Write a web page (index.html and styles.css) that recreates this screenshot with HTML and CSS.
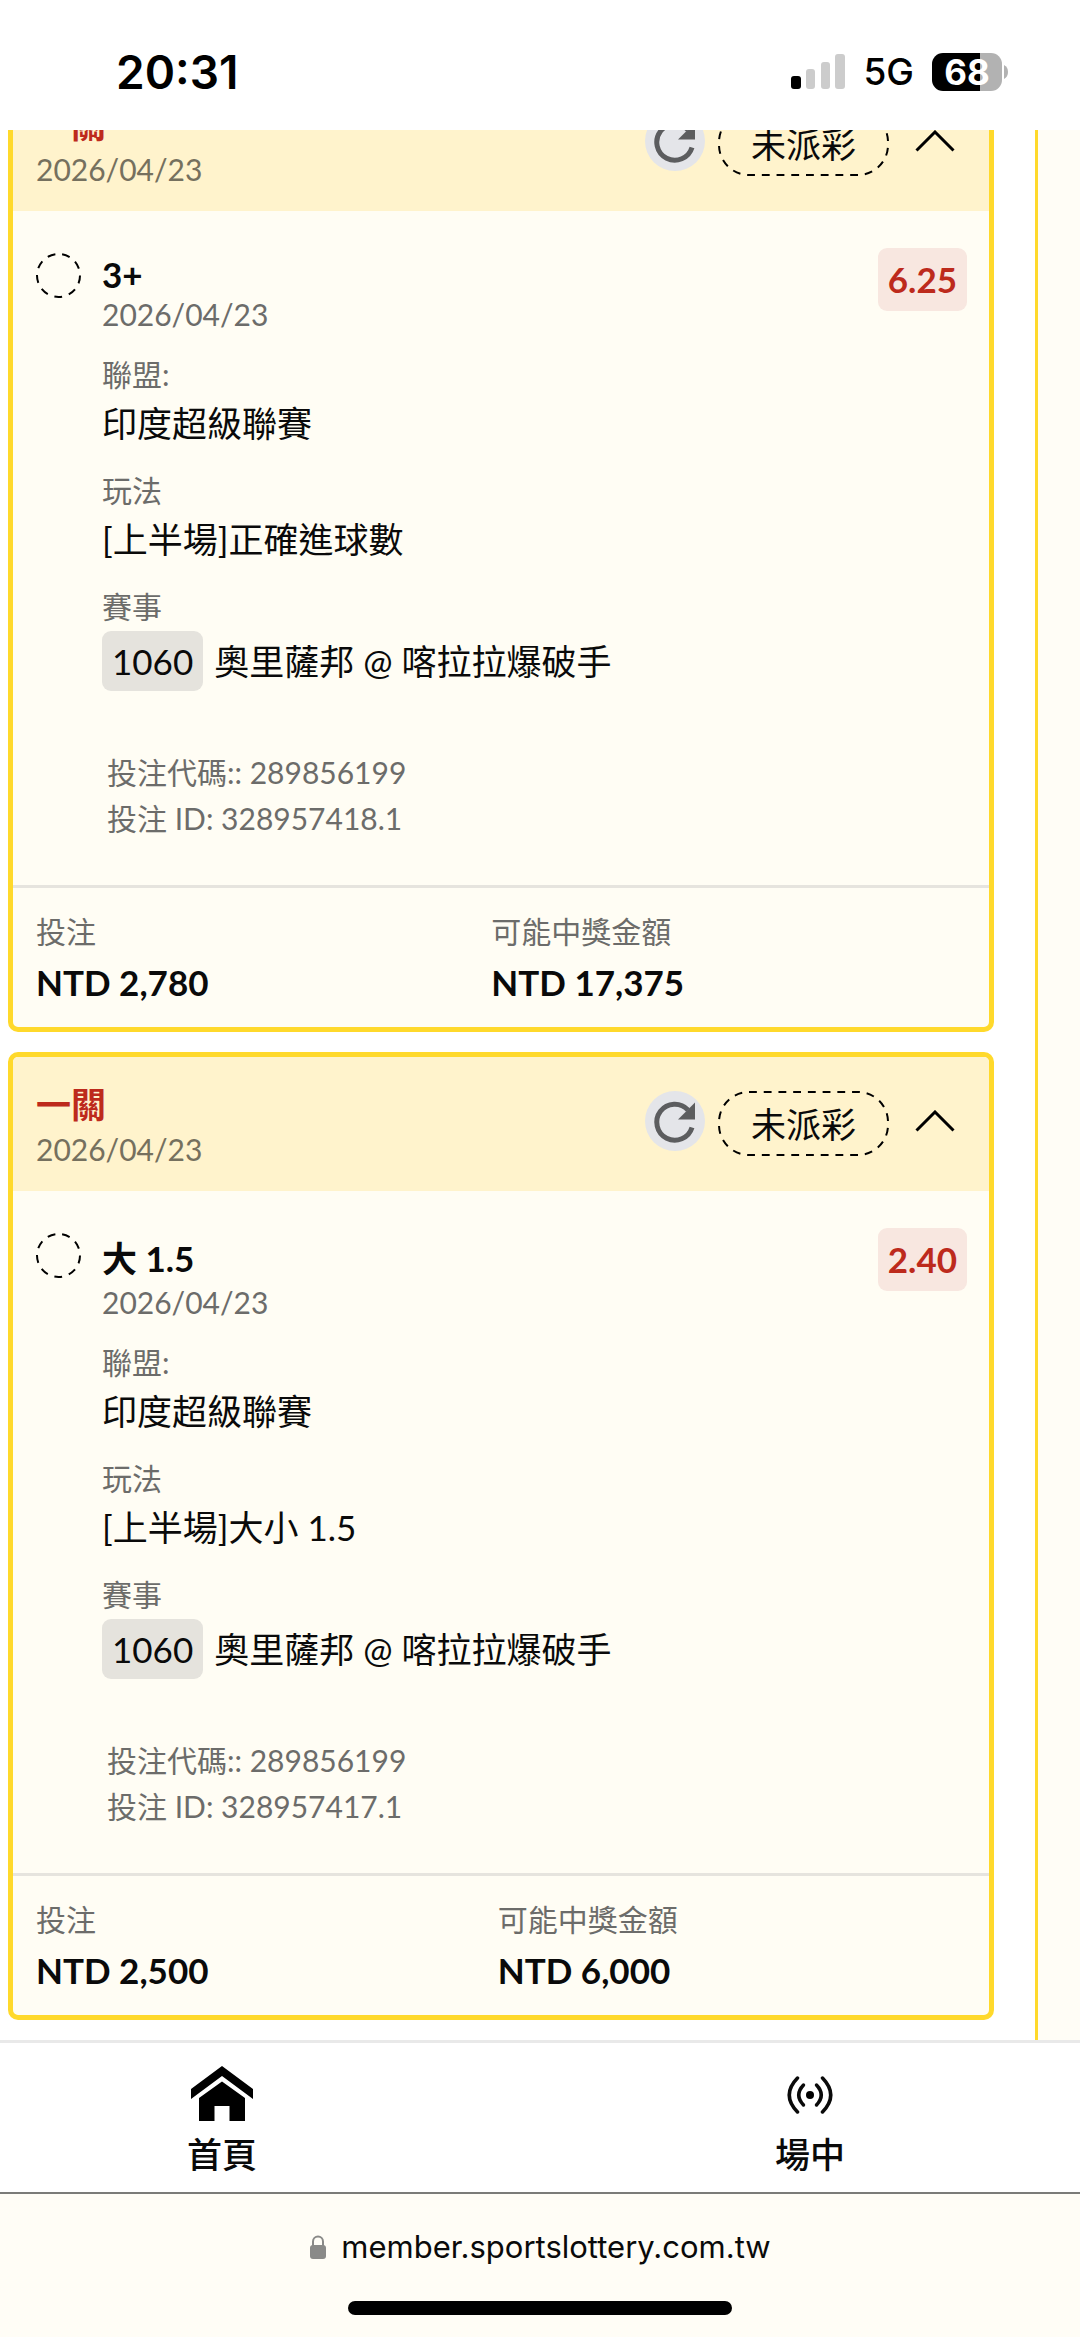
FILE: index.html
```html
<!DOCTYPE html>
<html lang="zh-Hant">
<head>
<meta charset="utf-8">
<meta name="viewport" content="width=device-width, initial-scale=1">
<title>投注紀錄</title>
<link rel="stylesheet" href="styles.css">
</head>
<body>
<div class="screen">
  <header class="status">
    <time class="status-time">20:31</time>
    <div class="status-right">
      <svg class="signal" viewBox="0 0 54 36" aria-hidden="true">
        <rect x="0" y="22" width="10" height="13" rx="3" fill="#000"/>
        <rect x="15" y="15" width="9" height="20" rx="3" fill="#ccc"/>
        <rect x="30" y="8" width="9" height="27" rx="3" fill="#ccc"/>
        <rect x="44" y="0" width="10" height="35" rx="3" fill="#ccc"/>
      </svg>
      <span class="network">5G</span>
      <span class="battery">68</span>
      <svg class="nub" viewBox="0 0 4 14" aria-hidden="true"><path d="M0 0Q4 2 4 7T0 14Z" fill="#b2b2b2"/></svg>
    </div>
  </header>

  <main class="bets">
    <div class="bet-list">
      <article class="card">
        <header class="card-head">
          <div>
            <h2 class="card-title">一關</h2>
            <p class="date">2026/04/23</p>
          </div>
          <div class="actions">
            <button class="refresh" type="button" aria-label="重新整理">
              <svg viewBox="0 0 60 60" aria-hidden="true"><path d="M47 36.500A18 18 0 1 1 43 19" fill="none" stroke="#5c5d5f" stroke-width="5"/><path d="M50 11.500V28.500H33Z" fill="#5c5d5f"/></svg>
            </button>
            <span class="state">
              <svg class="outline" viewBox="0 0 171 65" aria-hidden="true"><rect x="1" y="1" width="169" height="63" rx="30" pathLength="420" stroke-dasharray="8 7"/></svg>
              未派彩
            </span>
            <button class="toggle" type="button" aria-label="收合">
              <svg viewBox="0 0 40 22" aria-hidden="true"><path d="M1.500 20.500 20 2 38.500 20.500" fill="none" stroke="#000" stroke-width="3"/></svg>
            </button>
          </div>
        </header>
        <div class="card-body">
          <svg class="mark" viewBox="0 0 45 45" aria-hidden="true"><circle cx="22.500" cy="22.500" r="21.500" pathLength="135" stroke-dasharray="8 7"/></svg>
          <div class="detail">
            <h3 class="pick">3+</h3>
            <p class="date">2026/04/23</p>
            <dl class="fields">
              <div><dt>聯盟:</dt><dd>印度超級聯賽</dd></div>
              <div><dt>玩法</dt><dd>[上半場]正確進球數</dd></div>
              <div><dt>賽事</dt><dd class="match"><span class="code">1060</span>奧里薩邦 @ 喀拉拉爆破手</dd></div>
            </dl>
            <div class="ids"><p>投注代碼:: 289856199</p><p>投注 ID: 328957418.1</p></div>
          </div>
          <strong class="odds">6.25</strong>
        </div>
        <dl class="totals">
          <div><dt>投注</dt><dd>NTD 2,780</dd></div>
          <div><dt>可能中獎金額</dt><dd>NTD 17,375</dd></div>
        </dl>
      </article>

      <article class="card">
        <header class="card-head">
          <div>
            <h2 class="card-title">一關</h2>
            <p class="date">2026/04/23</p>
          </div>
          <div class="actions">
            <button class="refresh" type="button" aria-label="重新整理">
              <svg viewBox="0 0 60 60" aria-hidden="true"><path d="M47 36.500A18 18 0 1 1 43 19" fill="none" stroke="#5c5d5f" stroke-width="5"/><path d="M50 11.500V28.500H33Z" fill="#5c5d5f"/></svg>
            </button>
            <span class="state">
              <svg class="outline" viewBox="0 0 171 65" aria-hidden="true"><rect x="1" y="1" width="169" height="63" rx="30" pathLength="420" stroke-dasharray="8 7"/></svg>
              未派彩
            </span>
            <button class="toggle" type="button" aria-label="收合">
              <svg viewBox="0 0 40 22" aria-hidden="true"><path d="M1.500 20.500 20 2 38.500 20.500" fill="none" stroke="#000" stroke-width="3"/></svg>
            </button>
          </div>
        </header>
        <div class="card-body">
          <svg class="mark" viewBox="0 0 45 45" aria-hidden="true"><circle cx="22.500" cy="22.500" r="21.500" pathLength="135" stroke-dasharray="8 7"/></svg>
          <div class="detail">
            <h3 class="pick pick-cjk">大 1.5</h3>
            <p class="date">2026/04/23</p>
            <dl class="fields">
              <div><dt>聯盟:</dt><dd>印度超級聯賽</dd></div>
              <div><dt>玩法</dt><dd>[上半場]大小 1.5</dd></div>
              <div><dt>賽事</dt><dd class="match"><span class="code">1060</span>奧里薩邦 @ 喀拉拉爆破手</dd></div>
            </dl>
            <div class="ids"><p>投注代碼:: 289856199</p><p>投注 ID: 328957417.1</p></div>
          </div>
          <strong class="odds">2.40</strong>
        </div>
        <dl class="totals">
          <div><dt>投注</dt><dd>NTD 2,500</dd></div>
          <div><dt>可能中獎金額</dt><dd>NTD 6,000</dd></div>
        </dl>
      </article>
    </div>
    <aside class="next-panel"></aside>
  </main>

  <nav class="tabs">
    <a class="tab tab-home" href="#home">
      <svg viewBox="0 0 62 56" aria-hidden="true"><path d="M31 0 62 23V33L31 10 0 33V23Z"/><path d="M31 15.500 54 32V55H38.500V40H23.500V55H8V32Z"/></svg>
      首頁
    </a>
    <a class="tab" href="#live">
      <svg viewBox="0 0 62 56" aria-hidden="true"><circle cx="31" cy="29" r="4"/><g fill="none" stroke="#0a0a0a" stroke-width="3.500" stroke-linecap="round"><path d="M24.500 19Q15 29 24.500 39"/><path d="M37.500 19Q47 29 37.500 39"/><path d="M18.500 12Q2 29 18.500 46"/><path d="M43.500 12Q60 29 43.500 46"/></g></svg>
      場中
    </a>
  </nav>

  <footer class="browser">
    <div class="address">
      <svg class="lock" viewBox="0 0 18 24" aria-hidden="true"><rect x="1" y="10" width="16" height="14" rx="3" fill="#8a8a88"/><path d="M4 11V6.500A5 5 0 0 1 14 6.500V11" fill="none" stroke="#8a8a88" stroke-width="2"/></svg>
      member.sportslottery.com.tw
    </div>
    <div class="indicator"></div>
  </footer>
</div>
</body>
</html>
```
FILE: styles.css
```css
* {
  box-sizing: border-box;
}

body, h2, h3, p, dl, dd {
  margin: 0;
}

body {
  background: #fff;
  color: #0a0a0a;
  font: 35px/54px Lato, "Noto Sans CJK TC", sans-serif;
}

button {
  border: 0;
  padding: 0;
  background: none;
}

svg {
  display: block;
  flex: none;
}

.screen {
  display: grid;
  grid-template-rows: auto 1fr auto auto;
  height: 100vh;
}

/* status bar */
.status {
  display: flex;
  justify-content: space-between;
  align-items: center;
  height: 130px;
  padding: 14px 72px 0 116px;
  color: #000;
  font-family: Inter, sans-serif;
}

.status-time {
  font-size: 46px;
  font-weight: 600;
}

.status-right {
  display: flex;
  align-items: center;
}

.signal {
  width: 54px;
  height: 36px;
}

.network {
  margin: 0 18px;
  font-size: 37px;
  font-weight: 500;
}

.battery {
  width: 70px;
  border-radius: 11px;
  background: linear-gradient(90deg, #000 68%, #b2b2b2 68%);
  color: #fff;
  font-size: 35px;
  font-weight: 700;
  line-height: 38px;
  text-align: center;
}

.nub {
  width: 4px;
  height: 14px;
  margin-left: 2px;
}

/* bet list, scrolled partway under the status bar */
.bets {
  display: flex;
  gap: 41px;
  min-height: 0;
  overflow: hidden;
  padding-left: 8px;
}

.bet-list {
  display: flex;
  flex: 1;
  flex-direction: column;
  gap: 20px;
  margin-top: -58px;
}

.next-panel {
  width: 45px;
  border-left: 3px solid #ffd92b;
  background: #fffdf6;
}

.card {
  flex: none;
  overflow: hidden;
  border: 5px solid #ffd92b;
  border-radius: 10px;
  background: #fffdf4;
}

.card-head {
  display: flex;
  justify-content: space-between;
  padding: 22px 22px 22px 23px;
  background: #fff3cc;
}

.card-title {
  color: #bd2a1c;
  font-size: 35px;
  font-weight: 700;
  line-height: 50px;
}

.date {
  color: #6c6c6a;
  font-size: 30px;
  line-height: 38px;
}

.card-head .date {
  color: #75705e;
  line-height: 40px;
}

.actions {
  display: flex;
  align-items: flex-start;
  gap: 13px;
  padding-top: 12px;
}

.refresh {
  width: 60px;
  height: 60px;
  border-radius: 50%;
  background: #e4e5e9;
}

.state {
  position: relative;
  padding: 6px 33px 5px;
}

.outline {
  position: absolute;
  inset: 0;
  width: 100%;
  height: 100%;
}

.outline rect, .mark circle {
  fill: none;
  stroke: #000;
  stroke-width: 2;
}

.toggle {
  display: grid;
  place-items: center;
  width: 65px;
  height: 60px;
}

.toggle svg {
  width: 40px;
  height: 22px;
}

.card-body {
  display: flex;
  align-items: flex-start;
  padding: 42px 22px 44px 23px;
}

.mark {
  width: 45px;
  height: 45px;
  margin-right: 21px;
}

.detail {
  flex: 1;
}

.pick {
  font-size: 35px;
  font-weight: 700;
  line-height: 42px;
}

.pick-cjk {
  line-height: 50px;
}

.odds {
  margin-top: -5px;
  padding: 0 10px;
  border-radius: 9px;
  background: #f8e7e0;
  color: #bd2a1c;
  line-height: 63px;
}

.fields {
  display: grid;
  gap: 18px;
  margin-top: 19px;
}

dt, .ids {
  color: #6c6c6a;
  font-size: 30px;
  line-height: 44px;
}

.match {
  display: flex;
  align-items: center;
  gap: 11px;
  margin-top: 3px;
}

.code {
  padding: 0 10px;
  border-radius: 9px;
  background: #e5e3dd;
  line-height: 60px;
}

.ids {
  margin: 58px 0 0 5px;
  line-height: 46px;
}

.totals {
  display: flex;
  padding: 21px 22px 18px 23px;
  border-top: 3px solid #e6e4de;
}

.totals > div {
  flex: 1 1 auto;
}

.totals dd {
  margin-top: 2px;
  font-weight: 700;
}

/* site tab bar */
.tabs {
  display: grid;
  grid-template-columns: 1fr 1fr;
  border-top: 3px solid #e9e9e9;
  background: #fff;
}

.tab {
  display: flex;
  flex-direction: column;
  align-items: center;
  gap: 4px;
  padding: 23px 0 12px;
  color: #0a0a0a;
  font-weight: 500;
  font-family: "Noto Sans CJK TC", sans-serif;
  text-decoration: none;
}

.tab-home {
  padding-right: 96px;
}

.tab svg {
  width: 62px;
  height: 56px;
}

/* browser toolbar */
.browser {
  display: flex;
  flex-direction: column;
  align-items: center;
  height: 145px;
  border-top: 2px solid #7b7b78;
  background: #fffdf6;
}

.address {
  display: flex;
  align-items: center;
  gap: 14px;
  padding-top: 33px;
  font: 31px/40px Inter, sans-serif;
}

.lock {
  width: 18px;
  height: 24px;
}

.indicator {
  width: 384px;
  height: 14px;
  margin-top: 34px;
  border-radius: 7px;
  background: #000;
}
```
